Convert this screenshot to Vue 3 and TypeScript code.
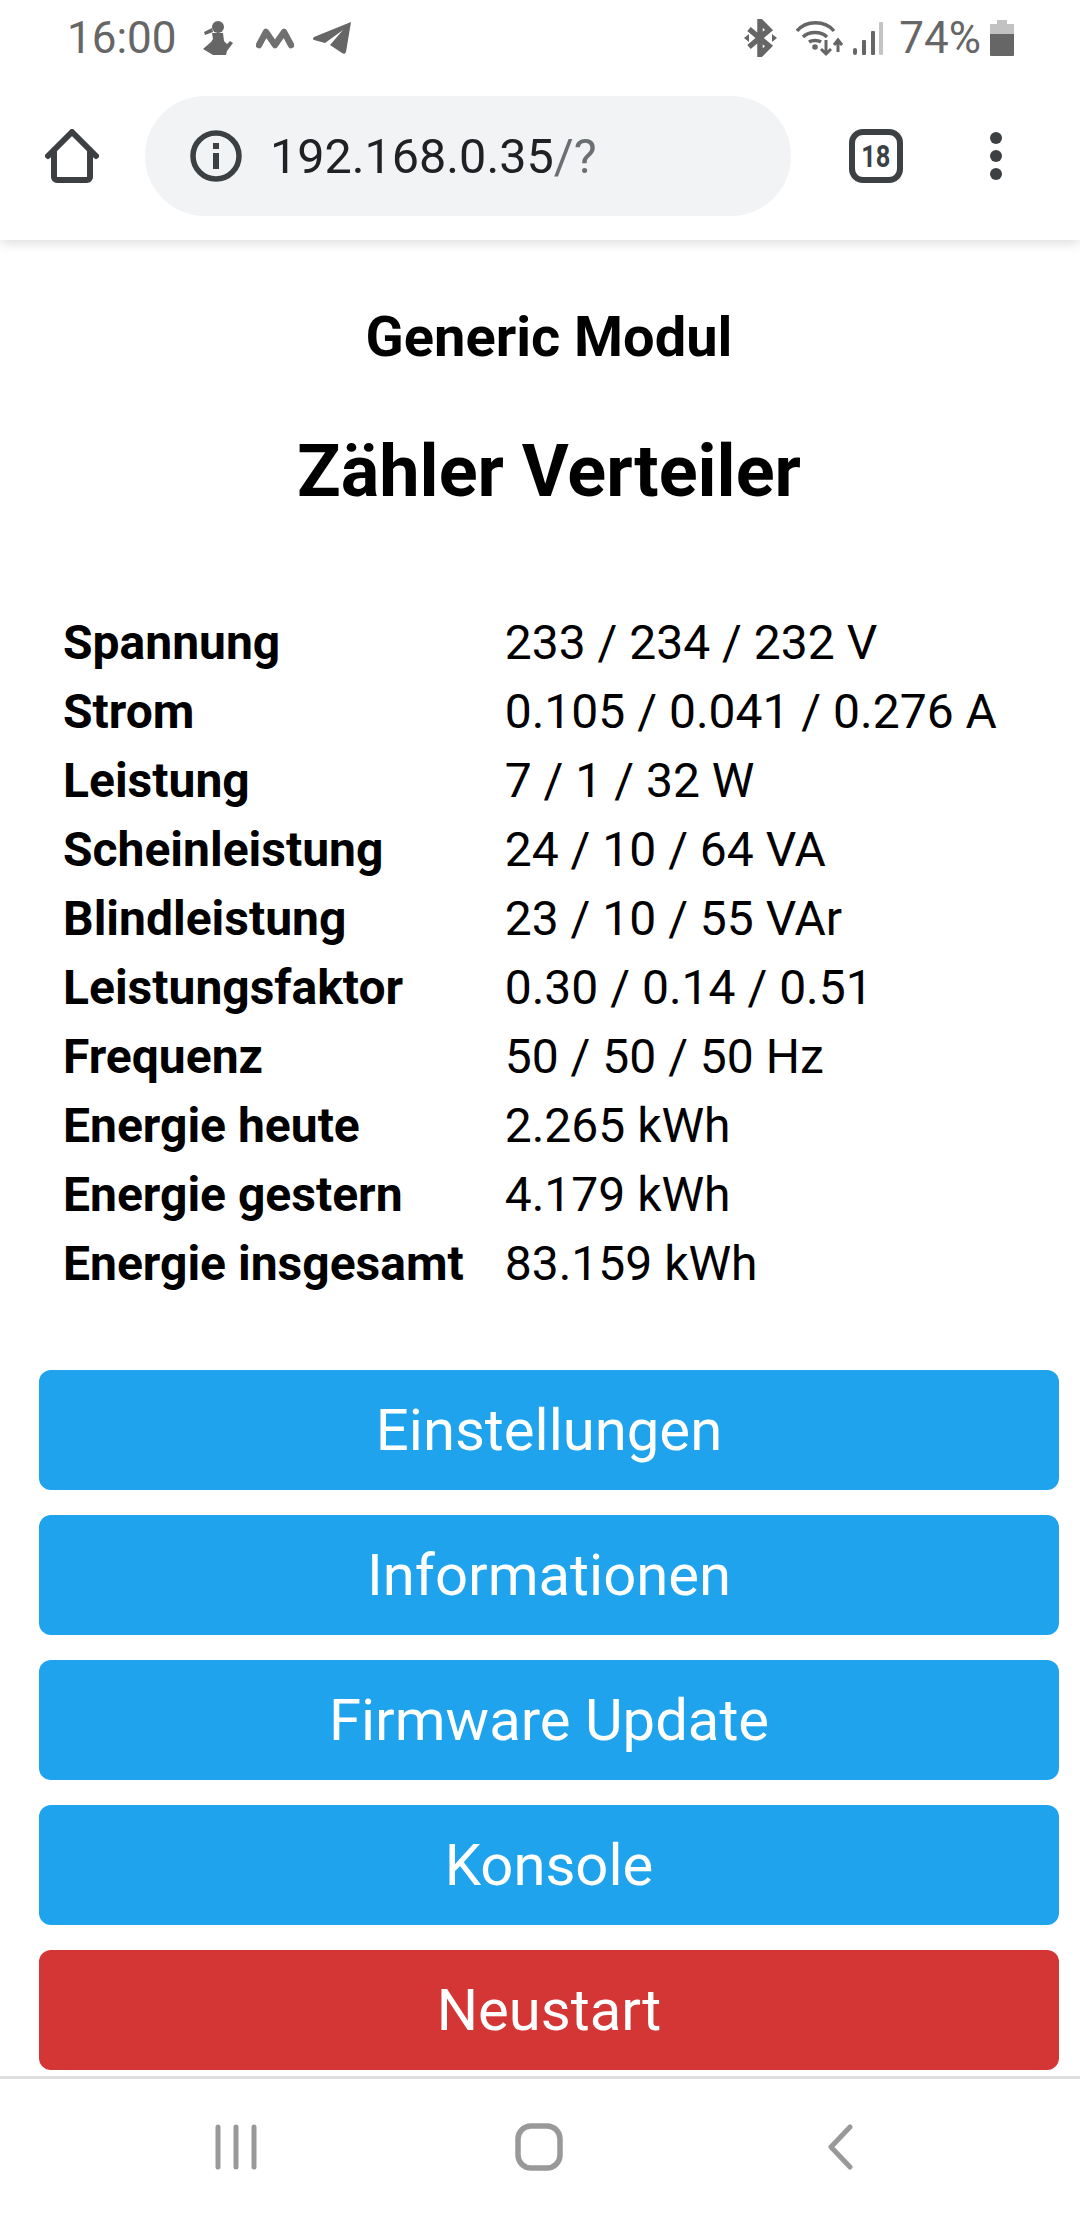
<template>
  <div class="phone">
    <header class="chrome">
      <div class="status">
        <span class="time">16:00</span>
        <svg class="ic person" width="30" height="34" viewBox="0 0 30 34"><circle cx="15" cy="6" r="6" fill="#666"/><path d="M9 7 1 11l1 3 8-3zM9 12h11l1 8 3 3 3-3 3 2-6 8-1 4H10L0 28l8-7 2-3z" fill="#666"/></svg>
        <svg class="ic m" width="38" height="22" viewBox="0 0 38 22"><path d="M3 18 10 5l9 13 9-13 7 13" fill="none" stroke="#707070" stroke-width="6.500" stroke-linecap="round" stroke-linejoin="round"/></svg>
        <svg class="ic tg" width="39" height="34" viewBox="0 0 39 34"><path d="M38 1 1 16q-2 2 0 3l11 3 18-13-13 15 12 8q3 2 4-1z" fill="#666"/></svg>
        <span class="spacer"></span>
        <svg class="ic" width="33" height="38" viewBox="0 0 33 38"><path d="M5 10l20 17-9 9V2l9 9L5 28" fill="none" stroke="#666" stroke-width="5.500"/><path d="M0 19l5-4v8zM33 19l-5-4v8z" fill="#666"/></svg>
        <svg class="ic wifi" width="47" height="37" viewBox="0 0 47 37"><path d="M1 11C10 0 29 0 38 11M7 17c6-6 18-6 24 0M13 22c3-2 9-2 12 0" fill="none" stroke="#666" stroke-width="3.500"/><circle cx="19" cy="27" r="2.800" fill="#666"/><path d="M30 20v13M25 29l5 5 5-5M42 32V21M38 25l4-5 4 5" fill="none" stroke="#666" stroke-width="3"/></svg>
        <svg class="ic sig" width="30" height="36" viewBox="0 0 30 36"><rect x="0" y="28" width="4" height="7" rx="2" fill="#666"/><rect x="9" y="20" width="4" height="15" rx="1" fill="#666"/><rect x="18" y="11" width="4" height="24" rx="1" fill="#666"/><rect x="26" y="2" width="4" height="33" rx="1" fill="#c4c4c4"/></svg>
        <span class="batt-text">74%</span>
        <svg class="ic batt" width="24" height="36" viewBox="0 0 24 36"><path d="M7 0h10v4h7v10H0V4h7z" fill="#c2c2c2"/><path d="M0 14h24v21a1 1 0 0 1-1 1H1a1 1 0 0 1-1-1z" fill="#666"/></svg>
      </div>
      <div class="toolbar">
        <svg class="home" width="54" height="54" viewBox="0 0 54 54"><path d="M3 27 27 3l24 24M9 21v27a3 3 0 0 0 3 3h30a3 3 0 0 0 3-3V21" fill="none" stroke="#3c4043" stroke-width="6" stroke-linecap="round" stroke-linejoin="round"/></svg>
        <div class="omnibox">
          <svg width="52" height="52" viewBox="0 0 52 52"><circle cx="26" cy="26" r="23" fill="none" stroke="#3c4043" stroke-width="5.500"/><rect x="23" y="23" width="6" height="16" fill="#3c4043"/><rect x="23" y="13" width="6" height="6" fill="#3c4043"/></svg>
          <span class="url">192.168.0.35<span class="url-path">/?</span></span>
        </div>
        <div class="tabs"><span>18</span></div>
        <div class="menu"><i></i><i></i><i></i></div>
      </div>
    </header>
    <main class="content">
      <h3>Generic Modul</h3>
      <h2>Zähler Verteiler</h2>
      <table>
        <tbody>
          <tr v-for="row in rows" :key="row[0]">
            <th>{{ row[0] }}</th>
            <td>{{ row[1] }}</td>
          </tr>
        </tbody>
      </table>
      <div class="buttons">
        <button v-for="b in buttons" :key="b">{{ b }}</button>
        <button class="red">Neustart</button>
      </div>
    </main>
    <nav class="navbar">
      <svg width="46" height="46" viewBox="0 0 46 46"><path d="M5 3v40M23 3v40M41 3v40" stroke="#999" stroke-width="5" stroke-linecap="round"/></svg>
      <svg width="48" height="48" viewBox="0 0 48 48"><rect x="3" y="3" width="42" height="42" rx="13" fill="none" stroke="#999" stroke-width="5.500"/></svg>
      <svg width="30" height="46" viewBox="0 0 30 46"><path d="M26 3 7 23l19 20" fill="none" stroke="#999" stroke-width="5" stroke-linecap="round" stroke-linejoin="round"/></svg>
    </nav>
  </div>
</template>

<script setup lang="ts">
const rows: [string, string][] = [
  ["Spannung", "233 / 234 / 232 V"],
  ["Strom", "0.105 / 0.041 / 0.276 A"],
  ["Leistung", "7 / 1 / 32 W"],
  ["Scheinleistung", "24 / 10 / 64 VA"],
  ["Blindleistung", "23 / 10 / 55 VAr"],
  ["Leistungsfaktor", "0.30 / 0.14 / 0.51"],
  ["Frequenz", "50 / 50 / 50 Hz"],
  ["Energie heute", "2.265 kWh"],
  ["Energie gestern", "4.179 kWh"],
  ["Energie insgesamt", "83.159 kWh"],
];

const buttons = ["Einstellungen", "Informationen", "Firmware Update", "Konsole"];
</script>

<style>
html,
body {
  margin: 0;
  background: #fff;
}
</style>

<style scoped>
.phone {
  width: 1080px;
  height: 2220px;
  display: flex;
  flex-direction: column;
  overflow: hidden;
  font-family: Roboto, "Liberation Sans", sans-serif;
  color: #000;
  background: #fff;
}

.chrome {
  height: 240px;
  flex-shrink: 0;
  box-shadow: 0 2px 12px rgba(0, 0, 0, 0.16);
  position: relative;
  background: #fff;
}

.status {
  height: 76px;
  padding: 0 66px 0 67px;
  display: flex;
  align-items: center;
  color: #666;
}

.time {
  font-size: 44px;
  color: #666;
}

.batt-text {
  font-size: 44px;
  color: #666;
  margin-left: 16px;
}

.ic {
  flex-shrink: 0;
}

.person {
  margin-left: 26px;
}

.m {
  margin-left: 23px;
}

.tg {
  margin-left: 19px;
}

.spacer {
  flex: 1;
}

.wifi {
  margin-left: 19px;
}

.sig {
  margin-left: 10px;
}

.batt {
  margin-left: 9px;
}

.toolbar {
  height: 120px;
  margin-top: 20px;
  display: flex;
  align-items: center;
  position: relative;
}

.home {
  margin-left: 45px;
}

.omnibox {
  margin-left: 46px;
  width: 646px;
  height: 120px;
  box-sizing: border-box;
  padding-left: 45px;
  background: #f1f3f4;
  border-radius: 60px;
  display: flex;
  align-items: center;
  gap: 28px;
}

.url {
  font-size: 48.500px;
  color: #202124;
}

.url-path {
  color: #6b6e72;
}

.tabs {
  margin-left: 58px;
  width: 54px;
  height: 54px;
  box-sizing: border-box;
  border: 6px solid #3c4043;
  border-radius: 14px;
  display: flex;
  align-items: center;
  justify-content: center;
  font-size: 31px;
  font-weight: 700;
  color: #3c4043;
}

.tabs span {
  transform: scaleX(0.82);
}

.menu {
  margin-left: 87px;
  display: flex;
  flex-direction: column;
  gap: 6px;
}

.menu i {
  display: block;
  width: 12px;
  height: 12px;
  border-radius: 50%;
  background: #3c4043;
}

.content {
  flex: 1;
  min-height: 0;
  overflow: hidden;
  padding: 0 21px 0 39px;
}

h3 {
  margin: 66px 0 0;
  font-size: 56px;
  line-height: 62px;
  font-weight: 700;
  text-align: center;
}

h2 {
  margin: 62px 0 0;
  font-size: 72px;
  line-height: 84px;
  font-weight: 700;
  text-align: center;
}

table {
  margin: 94px 0 0 22px;
  border-collapse: collapse;
  font-size: 48px;
}

th {
  padding: 0 41px 0 2px;
  height: 69px;
  text-align: left;
  font-weight: 700;
  white-space: nowrap;
}

td {
  padding: 0;
  white-space: nowrap;
}

.buttons {
  margin-top: 72px;
  display: flex;
  flex-direction: column;
  gap: 25px;
}

button {
  height: 120px;
  flex-shrink: 0;
  border: 0;
  padding: 0;
  border-radius: 12px;
  background: #1fa3ec;
  color: #fff;
  font: 400 58px Roboto, "Liberation Sans", sans-serif;
}

button.red {
  background: #d43535;
}

.navbar {
  height: 144px;
  flex-shrink: 0;
  box-sizing: border-box;
  border-top: 3px solid #dfdfdf;
  display: flex;
  align-items: center;
  padding: 0 0 5px;
  position: relative;
  background: #fff;
}

.navbar svg:nth-child(1) {
  margin-left: 213px;
}

.navbar svg:nth-child(2) {
  margin-left: 256px;
}

.navbar svg:nth-child(3) {
  margin-left: 261px;
}
</style>
